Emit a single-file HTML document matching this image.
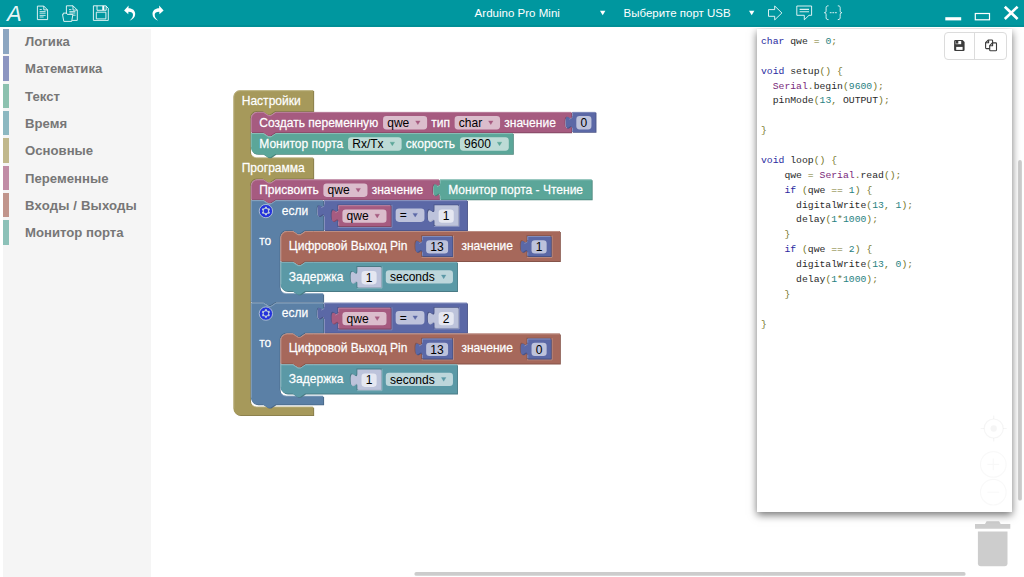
<!DOCTYPE html>
<html><head><meta charset="utf-8"><title>Arduino Blocks</title>
<style>
html,body{margin:0;padding:0;width:1024px;height:577px;overflow:hidden;background:#fff;font-family:"Liberation Sans",sans-serif;}
#top{position:absolute;left:0;top:0;width:1024px;height:27px;background:#00979f;}
#top svg{position:absolute;left:0;top:0;}
.tt{position:absolute;top:0;height:27px;line-height:30px;color:#fff;font-size:11.6px;white-space:nowrap;}
#side{position:absolute;left:2.5px;top:29px;width:148.7px;height:548px;background:#f5f5f5;}
.cat{position:absolute;left:2.5px;width:148px;height:24.5px;}
.cat .bar{position:absolute;left:0;top:0;width:6.6px;height:24.5px;}
.cat .lbl{position:absolute;left:22.6px;top:0;line-height:26px;font-size:13.15px;font-weight:bold;color:#777;white-space:nowrap;}
#ws{position:absolute;left:0;top:0;}
.t{font-family:"Liberation Sans",sans-serif;font-size:11pt;fill:#fff;stroke:#fff;stroke-width:0.35px;stroke-opacity:0.8;}
.e{font-family:"Liberation Sans",sans-serif;font-size:11pt;fill:#000;}
#clip{position:absolute;left:0;top:28px;width:1024px;height:549px;overflow:hidden;}
#panel{position:absolute;left:757px;top:1.3px;width:255px;height:482.3px;background:#fff;box-shadow:0 3px 8px rgba(0,0,0,0.55);}
#code{position:absolute;left:4px;top:5.7px;margin:0;font-family:"Liberation Mono",monospace;font-size:9.75px;line-height:14.88px;color:#2a2a2a;white-space:pre;}
.ck{color:#2a2aa0}.cp{color:#77772a}.cl{color:#2a8282}.ct{color:#7a2a7a}
#btns{position:absolute;left:187.2px;top:2.4px;width:63px;height:28px;border:1px solid #dcdcdc;border-radius:4px;background:#fff;box-sizing:border-box;}
#btns i{position:absolute;left:28.8px;top:0;width:1px;height:26px;background:#dcdcdc;}
</style></head><body>
<svg id="ws" width="1024" height="577" viewBox="0 0 1024 577">
<g transform="translate(233.4,90.25) scale(0.8333)">
<g transform="translate(0,0)">
<path d="m 0,8 A 8,8 0 0,1 8,0 H 95.88 v 25 H 50 l -6,4 -3,0 -6,-4 h -7 a 8,8 0 0,0 -8,8 v 40 a 8,8 0 0,0 8,8 H 95.88 v 25 H 50 l -6,4 -3,0 -6,-4 h -7 a 8,8 0 0,0 -8,8 v 258 a 8,8 0 0,0 8,8 H 95.88 v 10 H 8 a 8,8 0 0,1 -8,-8 z" fill="#857a49" transform="translate(1,1)"/>
<path d="m 0,8 A 8,8 0 0,1 8,0 H 95.88 v 25 H 50 l -6,4 -3,0 -6,-4 h -7 a 8,8 0 0,0 -8,8 v 40 a 8,8 0 0,0 8,8 H 95.88 v 25 H 50 l -6,4 -3,0 -6,-4 h -7 a 8,8 0 0,0 -8,8 v 258 a 8,8 0 0,0 8,8 H 95.88 v 10 H 8 a 8,8 0 0,1 -8,-8 z" fill="#a6995b"/>
<path d="m 0.5,7.5 A 7.5,7.5 0 0,1 8,0.5 H 95.38 M 22.34,78.66 a 8,8 0 0,0 5.66,2.34 l 2.34,0 H 95.38 M 22.34,377.66 a 8,8 0 0,0 5.66,2.34 l 2.34,0 H 95.38 M 0.5,382 V 7.5" fill="none" stroke="#c1b88c" stroke-width="1"/>
<text class="t" x="10" y="17.7" textLength="70.8" lengthAdjust="spacingAndGlyphs">Настройки</text>
<text class="t" x="10" y="98.7" textLength="75.64" lengthAdjust="spacingAndGlyphs">Программа</text>
</g>
<g transform="translate(21,26)">
<path d="m 0,8 A 8,8 0 0,1 8,0 H 15 l 6,4 3,0 6,-4 H 384.51 v 5 c 0,10 -8,-8 -8,7.5 s 8,-2.5 8,7.5 v 4.5 H 29.5 l -6,4 -3,0 -6,-4 H 0 z" fill="#854966" transform="translate(1,1)"/>
<path d="m 0,8 A 8,8 0 0,1 8,0 H 15 l 6,4 3,0 6,-4 H 384.51 v 5 c 0,10 -8,-8 -8,7.5 s 8,-2.5 8,7.5 v 4.5 H 29.5 l -6,4 -3,0 -6,-4 H 0 z" fill="#a65b80"/>
<path d="m 0.5,7.5 A 7.5,7.5 0 0,1 8,0.5 H 15 l 6,4 3,0 6,-4 H 384.01 M 379.51,19.3 l 3.68,-2.1 M 0.5,24 V 7.5" fill="none" stroke="#c18ca6" stroke-width="1"/>
<text class="t" x="10" y="17.7" textLength="142.73" lengthAdjust="spacingAndGlyphs">Создать переменную</text>
<rect x="158.6" y="5" width="52.89" height="16" rx="4" ry="4" fill="#fff" fill-opacity="0.6"/>
<text class="e" x="163.6" y="18.1" textLength="26.49" lengthAdjust="spacingAndGlyphs">qwe</text>
<path d="M 197.66,10.8 h 5.4 l -2.7,4.4 z" fill="#a65b80" stroke="#a65b80" stroke-width="0.4" stroke-linejoin="round"/>
<text class="t" x="216.49" y="17.7" textLength="22.5" lengthAdjust="spacingAndGlyphs">тип</text>
<rect x="244.49" y="5" width="54.52" height="16" rx="4" ry="4" fill="#fff" fill-opacity="0.6"/>
<text class="e" x="249.49" y="18.1" textLength="28.09" lengthAdjust="spacingAndGlyphs">char</text>
<path d="M 285.18,10.8 h 5.4 l -2.7,4.4 z" fill="#a65b80" stroke="#a65b80" stroke-width="0.4" stroke-linejoin="round"/>
<text class="t" x="304.01" y="17.7" textLength="61.93" lengthAdjust="spacingAndGlyphs">значение</text>
</g>
<g transform="translate(406.51,26)">
<path d="m 0,0 H 28.16 v 24 H 0 V 20 c 0,-10 -8,8 -8,-7.5 s 8,2.5 8,-7.5 z" fill="#495385" transform="translate(1,1)"/>
<path d="m 0,0 H 28.16 v 24 H 0 V 20 c 0,-10 -8,8 -8,-7.5 s 8,2.5 8,-7.5 z" fill="#5b68a6"/>
<path d="m 0.5,0.5 H 27.66 M -3.4,8.9 l 3.68,-2.1 M 0.5,23.5 V 19.5 M 0.5, 5 V 0.5" fill="none" stroke="#8c95c1" stroke-width="1"/>
<rect x="5" y="5" width="18.16" height="16" rx="4" ry="4" fill="#fff" fill-opacity="0.6"/>
<text class="e" x="10" y="18.1" textLength="8.03" lengthAdjust="spacingAndGlyphs">0</text>
</g>
<g transform="translate(21,51.5)">
<path d="m 0,0 H 15 l 6,4 3,0 6,-4 H 314.48 v 25 H 29.5 l -6,4 -3,0 -6,-4 H 8 a 8,8 0 0,1 -8,-8 z" fill="#49857a" transform="translate(1,1)"/>
<path d="m 0,0 H 15 l 6,4 3,0 6,-4 H 314.48 v 25 H 29.5 l -6,4 -3,0 -6,-4 H 8 a 8,8 0 0,1 -8,-8 z" fill="#5ba699"/>
<path d="m 0.5,0.5 H 15 l 6,4 3,0 6,-4 H 313.98 M 0.5,17 V 0.5" fill="none" stroke="#8cc1b8" stroke-width="1"/>
<text class="t" x="10" y="17.7" textLength="100.81" lengthAdjust="spacingAndGlyphs">Монитор порта</text>
<rect x="116.6" y="5" width="64.27" height="16" rx="4" ry="4" fill="#fff" fill-opacity="0.6"/>
<text class="e" x="121.6" y="18.1" textLength="37.69" lengthAdjust="spacingAndGlyphs">Rx/Tx</text>
<path d="M 167.04,10.8 h 5.4 l -2.7,4.4 z" fill="#5ba699" stroke="#5ba699" stroke-width="0.4" stroke-linejoin="round"/>
<text class="t" x="185.87" y="17.7" textLength="59.15" lengthAdjust="spacingAndGlyphs">скорость</text>
<rect x="250.87" y="5" width="58.61" height="16" rx="4" ry="4" fill="#fff" fill-opacity="0.6"/>
<text class="e" x="255.87" y="18.1" textLength="32.12" lengthAdjust="spacingAndGlyphs">9600</text>
<path d="M 295.65,10.8 h 5.4 l -2.7,4.4 z" fill="#5ba699" stroke="#5ba699" stroke-width="0.4" stroke-linejoin="round"/>
</g>
<g transform="translate(21,107)">
<path d="m 0,8 A 8,8 0 0,1 8,0 H 15 l 6,4 3,0 6,-4 H 225.79 v 5 c 0,10 -8,-8 -8,7.5 s 8,-2.5 8,7.5 v 4 H 29.5 l -6,4 -3,0 -6,-4 H 0 z" fill="#854966" transform="translate(1,1)"/>
<path d="m 0,8 A 8,8 0 0,1 8,0 H 15 l 6,4 3,0 6,-4 H 225.79 v 5 c 0,10 -8,-8 -8,7.5 s 8,-2.5 8,7.5 v 4 H 29.5 l -6,4 -3,0 -6,-4 H 0 z" fill="#a65b80"/>
<path d="m 0.5,7.5 A 7.5,7.5 0 0,1 8,0.5 H 15 l 6,4 3,0 6,-4 H 225.29 M 220.79,19.3 l 3.68,-2.1 M 0.5,23.5 V 7.5" fill="none" stroke="#c18ca6" stroke-width="1"/>
<text class="t" x="10" y="17.7" textLength="71.43" lengthAdjust="spacingAndGlyphs">Присвоить</text>
<rect x="87" y="5" width="52.89" height="16" rx="4" ry="4" fill="#fff" fill-opacity="0.6"/>
<text class="e" x="92" y="18.1" textLength="26.49" lengthAdjust="spacingAndGlyphs">qwe</text>
<path d="M 126.06,10.8 h 5.4 l -2.7,4.4 z" fill="#a65b80" stroke="#a65b80" stroke-width="0.4" stroke-linejoin="round"/>
<text class="t" x="144.89" y="17.7" textLength="61.93" lengthAdjust="spacingAndGlyphs">значение</text>
</g>
<g transform="translate(247.79,107)">
<path d="m 0,0 H 182.31 v 24 H 0 V 20 c 0,-10 -8,8 -8,-7.5 s 8,2.5 8,-7.5 z" fill="#49857a" transform="translate(1,1)"/>
<path d="m 0,0 H 182.31 v 24 H 0 V 20 c 0,-10 -8,8 -8,-7.5 s 8,2.5 8,-7.5 z" fill="#5ba699"/>
<path d="m 0.5,0.5 H 181.81 M -3.4,8.9 l 3.68,-2.1 M 0.5,23.5 V 19.5 M 0.5, 5 V 0.5" fill="none" stroke="#8cc1b8" stroke-width="1"/>
<text class="t" x="10" y="17.7" textLength="161.82" lengthAdjust="spacingAndGlyphs">Монитор порта - Чтение</text>
</g>
<g transform="translate(21,132)">
<path d="m 0,0 H 15 l 6,4 3,0 6,-4 H 86.83 v 5 c 0,10 -8,-8 -8,7.5 s 8,-2.5 8,7.5 v 16 H 64.53 l -6,4 -3,0 -6,-4 h -7 a 8,8 0 0,0 -8,8 v 60 a 8,8 0 0,0 8,8 H 86.83 v 10 H 29.5 l -6,4 -3,0 -6,-4 H 0 z" fill="#496685" transform="translate(1,1)"/>
<path d="m 0,0 H 15 l 6,4 3,0 6,-4 H 86.83 v 5 c 0,10 -8,-8 -8,7.5 s 8,-2.5 8,7.5 v 16 H 64.53 l -6,4 -3,0 -6,-4 h -7 a 8,8 0 0,0 -8,8 v 60 a 8,8 0 0,0 8,8 H 86.83 v 10 H 29.5 l -6,4 -3,0 -6,-4 H 0 z" fill="#5b80a6"/>
<path d="m 0.5,0.5 H 15 l 6,4 3,0 6,-4 H 86.33 M 81.83,19.3 l 3.68,-2.1 M 36.87,109.66 a 8,8 0 0,0 5.66,2.34 l 2.34,0 H 86.33 M 0.5,121.5 V 0.5" fill="none" stroke="#8ca6c1" stroke-width="1"/>
<g transform="translate(10,5)" opacity="0.6"><circle cx="8" cy="8" r="8" fill="#00f" stroke="#fff" stroke-width="1"/><path fill="#fff" d="m4.203,7.296 0,1.368 -0.92,0.677 -0.11,0.41 0.9,1.559 0.41,0.11 1.043,-0.457 1.187,0.683 0.127,1.134 0.3,0.3 1.8,0 0.3,-0.299 0.127,-1.138 1.185,-0.682 1.046,0.458 0.409,-0.11 0.9,-1.559 -0.11,-0.41 -0.92,-0.677 0,-1.366 0.92,-0.677 0.11,-0.41 -0.9,-1.559 -0.409,-0.109 -1.046,0.458 -1.185,-0.682 -0.127,-1.138 -0.3,-0.299 -1.8,0 -0.3,0.3 -0.126,1.135 -1.187,0.682 -1.043,-0.457 -0.41,0.11 -0.899,1.559 0.108,0.409z"/><circle cx="8" cy="8" r="2.7" fill="#00f"/></g>
<text class="t" x="37" y="17.7" textLength="31.74" lengthAdjust="spacingAndGlyphs">если</text>
<text class="t" x="10" y="53.7" textLength="14.48" lengthAdjust="spacingAndGlyphs">то</text>
</g>
<g transform="translate(108.83,132)">
<path d="m 0,0 H 20 H 171.61 v 36 H 0 V 20 c 0,-10 -8,8 -8,-7.5 s 8,2.5 8,-7.5 z" fill="#495385" transform="translate(1,1)"/>
<path d="m 0,0 H 20 H 171.61 v 36 H 0 V 20 c 0,-10 -8,8 -8,-7.5 s 8,2.5 8,-7.5 z" fill="#5b68a6"/>
<path d="m 0.5,0.5 H 19.5 H 171.11 M -3.4,8.9 l 3.68,-2.1 M 0.5,35.5 V 19.5 M 0.5, 5 V 0.5" fill="none" stroke="#8c95c1" stroke-width="1"/>
<path d="M 80.89,5 h -64.89 v 5 c 0,10 -8,-8 -8,7.5 s 8,-2.5 8,7.5 v 7 h 64.89 z M 161.61,5 h -30.16 v 5 c 0,10 -8,-8 -8,7.5 s 8,-2.5 8,7.5 v 6 h 30.16 z" fill="#495385"/>
<path d="M 81.39,5.5 v 27 h -64.89 M 10.9,24.3 l 3.68,-2.1 M 162.11,5.5 v 26 h -30.16 M 126.35,24.3 l 3.68,-2.1" fill="none" stroke="#8c95c1" stroke-width="1"/>
<rect x="85.89" y="10" width="34.56" height="16" rx="4" ry="4" fill="#fff" fill-opacity="0.6"/>
<text class="e" x="90.89" y="23.1" textLength="8.43" lengthAdjust="spacingAndGlyphs">=</text>
<path d="M 106.62,15.8 h 5.4 l -2.7,4.4 z" fill="#5b68a6" stroke="#5b68a6" stroke-width="0.4" stroke-linejoin="round"/>
</g>
<g transform="translate(125.83,138)">
<path d="m 0,0 H 62.89 v 25 H 0 V 20 c 0,-10 -8,8 -8,-7.5 s 8,2.5 8,-7.5 z" fill="#854966" transform="translate(1,1)"/>
<path d="m 0,0 H 62.89 v 25 H 0 V 20 c 0,-10 -8,8 -8,-7.5 s 8,2.5 8,-7.5 z" fill="#a65b80"/>
<path d="m 0.5,0.5 H 62.39 M -3.4,8.9 l 3.68,-2.1 M 0.5,24.5 V 19.5 M 0.5, 5 V 0.5" fill="none" stroke="#c18ca6" stroke-width="1"/>
<rect x="5" y="5" width="52.89" height="16" rx="4" ry="4" fill="#fff" fill-opacity="0.6"/>
<text class="e" x="10" y="18.1" textLength="26.49" lengthAdjust="spacingAndGlyphs">qwe</text>
<path d="M 44.06,10.8 h 5.4 l -2.7,4.4 z" fill="#a65b80" stroke="#a65b80" stroke-width="0.4" stroke-linejoin="round"/>
</g>
<g transform="translate(241.29,138)">
<path d="m 0,0 H 28.16 v 24 H 0 V 20 c 0,-10 -8,8 -8,-7.5 s 8,2.5 8,-7.5 z" fill="#b0b5cc" transform="translate(1,1)"/>
<path d="m 0,0 H 28.16 v 24 H 0 V 20 c 0,-10 -8,8 -8,-7.5 s 8,2.5 8,-7.5 z" fill="#bdc3db"/>
<rect x="5" y="5" width="18.16" height="16" rx="4" ry="4" fill="#fff" fill-opacity="0.6"/>
<text class="e" x="10" y="18.1" textLength="8.03" lengthAdjust="spacingAndGlyphs">1</text>
</g>
<g transform="translate(56.53,169)">
<path d="m 0,8 A 8,8 0 0,1 8,0 H 15 l 6,4 3,0 6,-4 H 40 H 335.39 v 36 H 29.5 l -6,4 -3,0 -6,-4 H 0 z" fill="#855349" transform="translate(1,1)"/>
<path d="m 0,8 A 8,8 0 0,1 8,0 H 15 l 6,4 3,0 6,-4 H 40 H 335.39 v 36 H 29.5 l -6,4 -3,0 -6,-4 H 0 z" fill="#a6685b"/>
<path d="m 0.5,7.5 A 7.5,7.5 0 0,1 8,0.5 H 15 l 6,4 3,0 6,-4 H 39.5 H 334.89 M 0.5,35.5 V 7.5" fill="none" stroke="#c1958c" stroke-width="1"/>
<path d="M 207.11,5 h -38.31 v 5 c 0,10 -8,-8 -8,7.5 s 8,-2.5 8,7.5 v 6 h 38.31 z M 325.39,5 h -30.16 v 5 c 0,10 -8,-8 -8,7.5 s 8,-2.5 8,7.5 v 6 h 30.16 z" fill="#855349"/>
<path d="M 207.61,5.5 v 26 h -38.31 M 163.7,24.3 l 3.68,-2.1 M 325.89,5.5 v 26 h -30.16 M 290.13,24.3 l 3.68,-2.1" fill="none" stroke="#c1958c" stroke-width="1"/>
<text class="t" x="10" y="22.7" textLength="142.36" lengthAdjust="spacingAndGlyphs">Цифровой Выход Pin</text>
<text class="t" x="217.11" y="22.7" textLength="61.93" lengthAdjust="spacingAndGlyphs">значение</text>
</g>
<g transform="translate(226.32,175)">
<path d="m 0,0 H 36.31 v 24 H 0 V 20 c 0,-10 -8,8 -8,-7.5 s 8,2.5 8,-7.5 z" fill="#495385" transform="translate(1,1)"/>
<path d="m 0,0 H 36.31 v 24 H 0 V 20 c 0,-10 -8,8 -8,-7.5 s 8,2.5 8,-7.5 z" fill="#5b68a6"/>
<path d="m 0.5,0.5 H 35.81 M -3.4,8.9 l 3.68,-2.1 M 0.5,23.5 V 19.5 M 0.5, 5 V 0.5" fill="none" stroke="#8c95c1" stroke-width="1"/>
<rect x="5" y="5" width="26.31" height="16" rx="4" ry="4" fill="#fff" fill-opacity="0.6"/>
<text class="e" x="10" y="18.1" textLength="16.07" lengthAdjust="spacingAndGlyphs">13</text>
</g>
<g transform="translate(352.76,175)">
<path d="m 0,0 H 28.16 v 24 H 0 V 20 c 0,-10 -8,8 -8,-7.5 s 8,2.5 8,-7.5 z" fill="#495385" transform="translate(1,1)"/>
<path d="m 0,0 H 28.16 v 24 H 0 V 20 c 0,-10 -8,8 -8,-7.5 s 8,2.5 8,-7.5 z" fill="#5b68a6"/>
<path d="m 0.5,0.5 H 27.66 M -3.4,8.9 l 3.68,-2.1 M 0.5,23.5 V 19.5 M 0.5, 5 V 0.5" fill="none" stroke="#8c95c1" stroke-width="1"/>
<rect x="5" y="5" width="18.16" height="16" rx="4" ry="4" fill="#fff" fill-opacity="0.6"/>
<text class="e" x="10" y="18.1" textLength="8.03" lengthAdjust="spacingAndGlyphs">1</text>
</g>
<g transform="translate(56.53,206)">
<path d="m 0,0 H 15 l 6,4 3,0 6,-4 H 40 H 211.95 v 35 H 29.5 l -6,4 -3,0 -6,-4 H 8 a 8,8 0 0,1 -8,-8 z" fill="#497a85" transform="translate(1,1)"/>
<path d="m 0,0 H 15 l 6,4 3,0 6,-4 H 40 H 211.95 v 35 H 29.5 l -6,4 -3,0 -6,-4 H 8 a 8,8 0 0,1 -8,-8 z" fill="#5b99a6"/>
<path d="m 0.5,0.5 H 15 l 6,4 3,0 6,-4 H 39.5 H 211.45 M 0.5,27 V 0.5" fill="none" stroke="#8cb8c1" stroke-width="1"/>
<path d="M 121.36,5 h -30.16 v 5 c 0,10 -8,-8 -8,7.5 s 8,-2.5 8,7.5 v 6 h 30.16 z" fill="#497a85"/>
<path d="M 121.86,5.5 v 26 h -30.16 M 86.1,24.3 l 3.68,-2.1" fill="none" stroke="#8cb8c1" stroke-width="1"/>
<text class="t" x="10" y="22.7" textLength="65.56" lengthAdjust="spacingAndGlyphs">Задержка</text>
<rect x="126.36" y="10" width="80.59" height="16" rx="4" ry="4" fill="#fff" fill-opacity="0.6"/>
<text class="e" x="131.36" y="23.1" textLength="53.77" lengthAdjust="spacingAndGlyphs">seconds</text>
<path d="M 193.12,15.8 h 5.4 l -2.7,4.4 z" fill="#5b99a6" stroke="#5b99a6" stroke-width="0.4" stroke-linejoin="round"/>
</g>
<g transform="translate(148.73,212)">
<path d="m 0,0 H 28.16 v 24 H 0 V 20 c 0,-10 -8,8 -8,-7.5 s 8,2.5 8,-7.5 z" fill="#b0b5cc" transform="translate(1,1)"/>
<path d="m 0,0 H 28.16 v 24 H 0 V 20 c 0,-10 -8,8 -8,-7.5 s 8,2.5 8,-7.5 z" fill="#bdc3db"/>
<rect x="5" y="5" width="18.16" height="16" rx="4" ry="4" fill="#fff" fill-opacity="0.6"/>
<text class="e" x="10" y="18.1" textLength="8.03" lengthAdjust="spacingAndGlyphs">1</text>
</g>
<g transform="translate(21,255)">
<path d="m 0,0 H 15 l 6,4 3,0 6,-4 H 86.83 v 5 c 0,10 -8,-8 -8,7.5 s 8,-2.5 8,7.5 v 16 H 64.53 l -6,4 -3,0 -6,-4 h -7 a 8,8 0 0,0 -8,8 v 60 a 8,8 0 0,0 8,8 H 86.83 v 10 H 29.5 l -6,4 -3,0 -6,-4 H 8 a 8,8 0 0,1 -8,-8 z" fill="#496685" transform="translate(1,1)"/>
<path d="m 0,0 H 15 l 6,4 3,0 6,-4 H 86.83 v 5 c 0,10 -8,-8 -8,7.5 s 8,-2.5 8,7.5 v 16 H 64.53 l -6,4 -3,0 -6,-4 h -7 a 8,8 0 0,0 -8,8 v 60 a 8,8 0 0,0 8,8 H 86.83 v 10 H 29.5 l -6,4 -3,0 -6,-4 H 8 a 8,8 0 0,1 -8,-8 z" fill="#5b80a6"/>
<path d="m 0.5,0.5 H 15 l 6,4 3,0 6,-4 H 86.33 M 81.83,19.3 l 3.68,-2.1 M 36.87,109.66 a 8,8 0 0,0 5.66,2.34 l 2.34,0 H 86.33 M 0.5,114 V 0.5" fill="none" stroke="#8ca6c1" stroke-width="1"/>
<g transform="translate(10,5)" opacity="0.6"><circle cx="8" cy="8" r="8" fill="#00f" stroke="#fff" stroke-width="1"/><path fill="#fff" d="m4.203,7.296 0,1.368 -0.92,0.677 -0.11,0.41 0.9,1.559 0.41,0.11 1.043,-0.457 1.187,0.683 0.127,1.134 0.3,0.3 1.8,0 0.3,-0.299 0.127,-1.138 1.185,-0.682 1.046,0.458 0.409,-0.11 0.9,-1.559 -0.11,-0.41 -0.92,-0.677 0,-1.366 0.92,-0.677 0.11,-0.41 -0.9,-1.559 -0.409,-0.109 -1.046,0.458 -1.185,-0.682 -0.127,-1.138 -0.3,-0.299 -1.8,0 -0.3,0.3 -0.126,1.135 -1.187,0.682 -1.043,-0.457 -0.41,0.11 -0.899,1.559 0.108,0.409z"/><circle cx="8" cy="8" r="2.7" fill="#00f"/></g>
<text class="t" x="37" y="17.7" textLength="31.74" lengthAdjust="spacingAndGlyphs">если</text>
<text class="t" x="10" y="53.7" textLength="14.48" lengthAdjust="spacingAndGlyphs">то</text>
</g>
<g transform="translate(108.83,255)">
<path d="m 0,0 H 20 H 171.61 v 36 H 0 V 20 c 0,-10 -8,8 -8,-7.5 s 8,2.5 8,-7.5 z" fill="#495385" transform="translate(1,1)"/>
<path d="m 0,0 H 20 H 171.61 v 36 H 0 V 20 c 0,-10 -8,8 -8,-7.5 s 8,2.5 8,-7.5 z" fill="#5b68a6"/>
<path d="m 0.5,0.5 H 19.5 H 171.11 M -3.4,8.9 l 3.68,-2.1 M 0.5,35.5 V 19.5 M 0.5, 5 V 0.5" fill="none" stroke="#8c95c1" stroke-width="1"/>
<path d="M 80.89,5 h -64.89 v 5 c 0,10 -8,-8 -8,7.5 s 8,-2.5 8,7.5 v 7 h 64.89 z M 161.61,5 h -30.16 v 5 c 0,10 -8,-8 -8,7.5 s 8,-2.5 8,7.5 v 6 h 30.16 z" fill="#495385"/>
<path d="M 81.39,5.5 v 27 h -64.89 M 10.9,24.3 l 3.68,-2.1 M 162.11,5.5 v 26 h -30.16 M 126.35,24.3 l 3.68,-2.1" fill="none" stroke="#8c95c1" stroke-width="1"/>
<rect x="85.89" y="10" width="34.56" height="16" rx="4" ry="4" fill="#fff" fill-opacity="0.6"/>
<text class="e" x="90.89" y="23.1" textLength="8.43" lengthAdjust="spacingAndGlyphs">=</text>
<path d="M 106.62,15.8 h 5.4 l -2.7,4.4 z" fill="#5b68a6" stroke="#5b68a6" stroke-width="0.4" stroke-linejoin="round"/>
</g>
<g transform="translate(125.83,261)">
<path d="m 0,0 H 62.89 v 25 H 0 V 20 c 0,-10 -8,8 -8,-7.5 s 8,2.5 8,-7.5 z" fill="#854966" transform="translate(1,1)"/>
<path d="m 0,0 H 62.89 v 25 H 0 V 20 c 0,-10 -8,8 -8,-7.5 s 8,2.5 8,-7.5 z" fill="#a65b80"/>
<path d="m 0.5,0.5 H 62.39 M -3.4,8.9 l 3.68,-2.1 M 0.5,24.5 V 19.5 M 0.5, 5 V 0.5" fill="none" stroke="#c18ca6" stroke-width="1"/>
<rect x="5" y="5" width="52.89" height="16" rx="4" ry="4" fill="#fff" fill-opacity="0.6"/>
<text class="e" x="10" y="18.1" textLength="26.49" lengthAdjust="spacingAndGlyphs">qwe</text>
<path d="M 44.06,10.8 h 5.4 l -2.7,4.4 z" fill="#a65b80" stroke="#a65b80" stroke-width="0.4" stroke-linejoin="round"/>
</g>
<g transform="translate(241.29,261)">
<path d="m 0,0 H 28.16 v 24 H 0 V 20 c 0,-10 -8,8 -8,-7.5 s 8,2.5 8,-7.5 z" fill="#b0b5cc" transform="translate(1,1)"/>
<path d="m 0,0 H 28.16 v 24 H 0 V 20 c 0,-10 -8,8 -8,-7.5 s 8,2.5 8,-7.5 z" fill="#bdc3db"/>
<rect x="5" y="5" width="18.16" height="16" rx="4" ry="4" fill="#fff" fill-opacity="0.6"/>
<text class="e" x="10" y="18.1" textLength="8.03" lengthAdjust="spacingAndGlyphs">2</text>
</g>
<g transform="translate(56.53,292)">
<path d="m 0,8 A 8,8 0 0,1 8,0 H 15 l 6,4 3,0 6,-4 H 40 H 335.39 v 36 H 29.5 l -6,4 -3,0 -6,-4 H 0 z" fill="#855349" transform="translate(1,1)"/>
<path d="m 0,8 A 8,8 0 0,1 8,0 H 15 l 6,4 3,0 6,-4 H 40 H 335.39 v 36 H 29.5 l -6,4 -3,0 -6,-4 H 0 z" fill="#a6685b"/>
<path d="m 0.5,7.5 A 7.5,7.5 0 0,1 8,0.5 H 15 l 6,4 3,0 6,-4 H 39.5 H 334.89 M 0.5,35.5 V 7.5" fill="none" stroke="#c1958c" stroke-width="1"/>
<path d="M 207.11,5 h -38.31 v 5 c 0,10 -8,-8 -8,7.5 s 8,-2.5 8,7.5 v 6 h 38.31 z M 325.39,5 h -30.16 v 5 c 0,10 -8,-8 -8,7.5 s 8,-2.5 8,7.5 v 6 h 30.16 z" fill="#855349"/>
<path d="M 207.61,5.5 v 26 h -38.31 M 163.7,24.3 l 3.68,-2.1 M 325.89,5.5 v 26 h -30.16 M 290.13,24.3 l 3.68,-2.1" fill="none" stroke="#c1958c" stroke-width="1"/>
<text class="t" x="10" y="22.7" textLength="142.36" lengthAdjust="spacingAndGlyphs">Цифровой Выход Pin</text>
<text class="t" x="217.11" y="22.7" textLength="61.93" lengthAdjust="spacingAndGlyphs">значение</text>
</g>
<g transform="translate(226.32,298)">
<path d="m 0,0 H 36.31 v 24 H 0 V 20 c 0,-10 -8,8 -8,-7.5 s 8,2.5 8,-7.5 z" fill="#495385" transform="translate(1,1)"/>
<path d="m 0,0 H 36.31 v 24 H 0 V 20 c 0,-10 -8,8 -8,-7.5 s 8,2.5 8,-7.5 z" fill="#5b68a6"/>
<path d="m 0.5,0.5 H 35.81 M -3.4,8.9 l 3.68,-2.1 M 0.5,23.5 V 19.5 M 0.5, 5 V 0.5" fill="none" stroke="#8c95c1" stroke-width="1"/>
<rect x="5" y="5" width="26.31" height="16" rx="4" ry="4" fill="#fff" fill-opacity="0.6"/>
<text class="e" x="10" y="18.1" textLength="16.07" lengthAdjust="spacingAndGlyphs">13</text>
</g>
<g transform="translate(352.76,298)">
<path d="m 0,0 H 28.16 v 24 H 0 V 20 c 0,-10 -8,8 -8,-7.5 s 8,2.5 8,-7.5 z" fill="#495385" transform="translate(1,1)"/>
<path d="m 0,0 H 28.16 v 24 H 0 V 20 c 0,-10 -8,8 -8,-7.5 s 8,2.5 8,-7.5 z" fill="#5b68a6"/>
<path d="m 0.5,0.5 H 27.66 M -3.4,8.9 l 3.68,-2.1 M 0.5,23.5 V 19.5 M 0.5, 5 V 0.5" fill="none" stroke="#8c95c1" stroke-width="1"/>
<rect x="5" y="5" width="18.16" height="16" rx="4" ry="4" fill="#fff" fill-opacity="0.6"/>
<text class="e" x="10" y="18.1" textLength="8.03" lengthAdjust="spacingAndGlyphs">0</text>
</g>
<g transform="translate(56.53,329)">
<path d="m 0,0 H 15 l 6,4 3,0 6,-4 H 40 H 211.95 v 35 H 29.5 l -6,4 -3,0 -6,-4 H 8 a 8,8 0 0,1 -8,-8 z" fill="#497a85" transform="translate(1,1)"/>
<path d="m 0,0 H 15 l 6,4 3,0 6,-4 H 40 H 211.95 v 35 H 29.5 l -6,4 -3,0 -6,-4 H 8 a 8,8 0 0,1 -8,-8 z" fill="#5b99a6"/>
<path d="m 0.5,0.5 H 15 l 6,4 3,0 6,-4 H 39.5 H 211.45 M 0.5,27 V 0.5" fill="none" stroke="#8cb8c1" stroke-width="1"/>
<path d="M 121.36,5 h -30.16 v 5 c 0,10 -8,-8 -8,7.5 s 8,-2.5 8,7.5 v 6 h 30.16 z" fill="#497a85"/>
<path d="M 121.86,5.5 v 26 h -30.16 M 86.1,24.3 l 3.68,-2.1" fill="none" stroke="#8cb8c1" stroke-width="1"/>
<text class="t" x="10" y="22.7" textLength="65.56" lengthAdjust="spacingAndGlyphs">Задержка</text>
<rect x="126.36" y="10" width="80.59" height="16" rx="4" ry="4" fill="#fff" fill-opacity="0.6"/>
<text class="e" x="131.36" y="23.1" textLength="53.77" lengthAdjust="spacingAndGlyphs">seconds</text>
<path d="M 193.12,15.8 h 5.4 l -2.7,4.4 z" fill="#5b99a6" stroke="#5b99a6" stroke-width="0.4" stroke-linejoin="round"/>
</g>
<g transform="translate(148.73,335)">
<path d="m 0,0 H 28.16 v 24 H 0 V 20 c 0,-10 -8,8 -8,-7.5 s 8,2.5 8,-7.5 z" fill="#b0b5cc" transform="translate(1,1)"/>
<path d="m 0,0 H 28.16 v 24 H 0 V 20 c 0,-10 -8,8 -8,-7.5 s 8,2.5 8,-7.5 z" fill="#bdc3db"/>
<rect x="5" y="5" width="18.16" height="16" rx="4" ry="4" fill="#fff" fill-opacity="0.6"/>
<text class="e" x="10" y="18.1" textLength="8.03" lengthAdjust="spacingAndGlyphs">1</text>
</g>
</g>
<!-- scrollbars -->
<rect x="414.4" y="572.1" width="551.2" height="3.7" rx="1.85" fill="#ccc"/>
<rect x="1018.1" y="160" width="3.8" height="340.6" rx="1.9" fill="#ccc"/>
<!-- trash -->
<g fill="#cdcdcd">
<path d="M975,524 h10 l1.6,-2.8 h12.5 l1.6,2.8 h9.6 v4.8 h-35.3z"/>
<path d="M977.9,531.5 h29.6 v31.7 a3,3 0 0 1 -3,3 h-23.6 a3,3 0 0 1 -3,-3z"/>
</g>
</svg>
<div id="side"></div>
<div class="cat" style="top:29.00px"><span class="bar" style="background:#8ca6c1"></span><span class="lbl">Логика</span></div>
<div class="cat" style="top:56.33px"><span class="bar" style="background:#8c95c1"></span><span class="lbl">Математика</span></div>
<div class="cat" style="top:83.66px"><span class="bar" style="background:#8cc1af"></span><span class="lbl">Текст</span></div>
<div class="cat" style="top:110.99px"><span class="bar" style="background:#8cb8c1"></span><span class="lbl">Время</span></div>
<div class="cat" style="top:138.32px"><span class="bar" style="background:#c1b88c"></span><span class="lbl">Основные</span></div>
<div class="cat" style="top:165.65px"><span class="bar" style="background:#c18ca6"></span><span class="lbl">Переменные</span></div>
<div class="cat" style="top:192.98px"><span class="bar" style="background:#c1958c"></span><span class="lbl" style="letter-spacing:0.15px">Входы / Выходы</span></div>
<div class="cat" style="top:220.31px"><span class="bar" style="background:#8cc1b8"></span><span class="lbl">Монитор порта</span></div>
<div id="clip"><div id="panel">
<pre id="code"><span class="ck">char</span> qwe <span class="cp">=</span> <span class="cl">0</span><span class="cp">;</span>

<span class="ck">void</span> setup<span class="cp">()</span> <span class="cp">{</span>
  <span class="ct">Serial</span><span class="cp">.</span>begin<span class="cp">(</span><span class="cl">9600</span><span class="cp">);</span>
  pinMode<span class="cp">(</span><span class="cl">13</span><span class="cp">,</span> OUTPUT<span class="cp">);</span>

<span class="cp">}</span>

<span class="ck">void</span> loop<span class="cp">()</span> <span class="cp">{</span>
    qwe <span class="cp">=</span> <span class="ct">Serial</span><span class="cp">.</span>read<span class="cp">();</span>
    <span class="ck">if</span> <span class="cp">(</span>qwe <span class="cp">==</span> <span class="cl">1</span><span class="cp">)</span> <span class="cp">{</span>
      digitalWrite<span class="cp">(</span><span class="cl">13</span><span class="cp">,</span> <span class="cl">1</span><span class="cp">);</span>
      delay<span class="cp">(</span><span class="cl">1</span><span class="cp">*</span><span class="cl">1000</span><span class="cp">);</span>
    <span class="cp">}</span>
    <span class="ck">if</span> <span class="cp">(</span>qwe <span class="cp">==</span> <span class="cl">2</span><span class="cp">)</span> <span class="cp">{</span>
      digitalWrite<span class="cp">(</span><span class="cl">13</span><span class="cp">,</span> <span class="cl">0</span><span class="cp">);</span>
      delay<span class="cp">(</span><span class="cl">1</span><span class="cp">*</span><span class="cl">1000</span><span class="cp">);</span>
    <span class="cp">}</span>

<span class="cp">}</span></pre>
<div id="btns"><i></i></div>
<svg style="position:absolute;left:0;top:0" width="255" height="60" viewBox="757 29 255 60">
<!-- floppy -->
<path d="M955.3,40.1 h7.3 l2,2 v7.6 a1.2,1.2 0 0 1 -1.2,1.2 h-8.1 a1.2,1.2 0 0 1 -1.2,-1.2 v-8.4 a1.2,1.2 0 0 1 1.2,-1.2 z" fill="#3c3c3c"/>
<rect x="955.6" y="41" width="5.6" height="3.2" fill="#fff"/>
<rect x="955.9" y="41" width="2.4" height="2.6" fill="#3c3c3c"/>
<rect x="956.2" y="46.9" width="6.4" height="3" fill="#fff"/>
<!-- duplicate -->
<g fill="#fff" stroke="#3a3a3a" stroke-width="1.1" stroke-linejoin="round">
<path d="M985.6,42.6 l2.8,-2.6 h3.4 a0.8,0.8 0 0 1 0.8,0.8 v7 a0.8,0.8 0 0 1 -0.8,0.8 h-5.4 a0.8,0.8 0 0 1 -0.8,-0.8 z"/>
<path d="M985.8,42.8 h2.8 v-2.6" fill="none"/>
<path d="M989.7,45.6 l2.6,-2.7 h3.4 a0.8,0.8 0 0 1 0.8,0.8 v6.3 a0.8,0.8 0 0 1 -0.8,0.8 h-5.2 a0.8,0.8 0 0 1 -0.8,-0.8 z"/>
<path d="M989.9,45.8 h2.7 v-2.7" fill="none"/>
</g>
</svg>
</div></div>
<svg style="position:absolute;left:0;top:0;pointer-events:none" width="1024" height="577" viewBox="0 0 1024 577">
<g fill="none" stroke="#000" stroke-opacity="0.04" stroke-width="1.2">
<circle cx="993.7" cy="428.5" r="9.5"/><path d="M993.7,415.5 v3.5 M993.7,438 v3.5 M980.7,428.5 h3.5 M1003.2,428.5 h3.5"/>
</g>
<g fill="none" stroke="#000" stroke-opacity="0.028" stroke-width="1.2">
<circle cx="993.3" cy="464.4" r="12.8"/><path d="M987.4,464.4 h11.8 M993.3,458.5 v11.8"/>
<circle cx="993.3" cy="492.2" r="12.8"/><path d="M987.4,492.2 h11.8"/>
</g>
<circle cx="993.7" cy="428.5" r="3.2" fill="#000" fill-opacity="0.04"/>
</svg>
<div id="top">
<svg width="1024" height="27" viewBox="0 0 1024 27">
<rect x="0" y="25" width="1024" height="2" fill="#000" fill-opacity="0.05"/>
<text x="7.1" y="20.9" font-family="Liberation Sans" font-style="italic" font-size="22" fill="#fff" fill-opacity="0.93">A</text>
<g fill="none" stroke="#fff" stroke-opacity="0.85" stroke-width="1">
<!-- new -->
<path d="M37.4,6.1 h6.4 l3.8,3.8 v9.7 h-10.2 z M43.8,6.1 v3.8 h3.8"/>
<path d="M39.6,9.5 h2.2 M39.6,11.6 h6 M39.6,13.2 h6 M39.6,15.4 h6 M39.6,17 h4" stroke-width="0.9"/>
<!-- open -->
<path d="M66.4,13.6 v-7.8 h6.6 l4.3,4.3 v10.3 h-5.2 M73,5.8 v4.3 h4.3"/>
<path d="M69,9.6 h2.4 M69.4,11.6 h6 M69.4,13 h6 M73,15.2 h2.6" stroke-width="0.9"/>
<path d="M62.5,14.4 h0.8 v-1.3 h3.2 l0.8,1.3 h5.6 l-1.2,7 h-7.9 z"/>
<!-- save -->
<path d="M93.4,5.8 h12.4 l2.5,2.5 v12.1 h-14.9 z M97,5.8 v4.5 h9.2 v-4.5 M96.3,18.9 v-6.7 h9.6 v6.7 z"/>
<!-- upload arrow -->
<path d="M768.5,9.6 h6.2 v-3.6 l7.2,6.95 l-7.2,6.95 v-3.6 h-6.2 z"/>
<!-- comment -->
<path d="M796.8,6 h14.8 v9.3 h-2.6 l-4.7,4.5 v-4.5 h-7.5 z"/>
<path d="M799.6,9.4 h9.4 M799.6,11.8 h9.4" stroke-width="1.1"/>
<!-- braces -->
<path d="M828.5,5.8 c-2.4,0 -2.4,1 -2.4,3 v1.8 c0,1.4 -0.4,2 -1.7,2.1 c1.3,0.1 1.7,0.7 1.7,2.1 v1.8 c0,2 0,3 2.4,3"/>
<path d="M837.8,5.8 c2.4,0 2.4,1 2.4,3 v1.8 c0,1.4 0.4,2 1.7,2.1 c-1.3,0.1 -1.7,0.7 -1.7,2.1 v1.8 c0,2 0,3 -2.4,3"/>
<path d="M829.8,12.7 h7" stroke-dasharray="1.8,0.8"/>
<!-- maximise -->
<rect x="975.3" y="13.5" width="14.2" height="6.3" stroke-opacity="1" stroke-width="1.2"/>
</g>
<g fill="#fff">
<rect x="102.3" y="5.8" width="2" height="4.3"/>
<!-- undo -->
<path d="M124.1,10.5 L128.6,5.5 L128.5,8.3 C132.6,8.3 135.2,10.6 135.2,14 C135.2,17 133,19.6 129.6,20.7 C132,18.6 133,16.8 133,14.8 C133,12.7 131.4,11.7 128.4,11.7 L128.3,14.3 Z"/>
<path d="M163.6,10.5 L159.1,5.5 L159.2,8.3 C155.1,8.3 152.5,10.6 152.5,14 C152.5,17 154.7,19.6 158.1,20.7 C155.7,18.6 154.7,16.8 154.7,14.8 C154.7,12.7 156.3,11.7 159.3,11.7 L159.4,14.3 Z"/>
<!-- dropdown triangles -->
<path d="M600,10.8 h5.4 l-2.7,4.4 z"/>
<path d="M749,10.8 h5.4 l-2.7,4.4 z"/>
<!-- minimise -->
<rect x="945.3" y="17.2" width="15.9" height="3.2"/>
</g>
<path d="M1004.8,6.7 L1017.6,19 M1017.6,6.7 L1004.8,19" stroke="#fff" stroke-width="2.6" fill="none"/>
<text x="474.6" y="17.4" font-family="Liberation Sans" font-size="11.5" fill="#fff" textLength="85.3" lengthAdjust="spacingAndGlyphs">Arduino Pro Mini</text>
<text x="623.6" y="17.4" font-family="Liberation Sans" font-size="11.5" fill="#fff" textLength="107" lengthAdjust="spacingAndGlyphs">Выберите порт USB</text>
</svg>
</div>
</body></html>
